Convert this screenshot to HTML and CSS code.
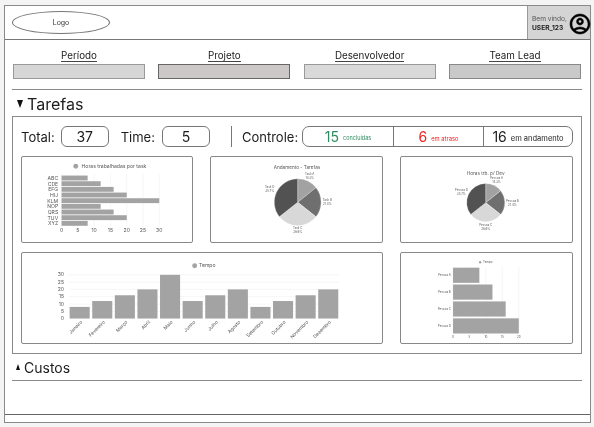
FILE: index.html
```html
<!DOCTYPE html>
<html lang="pt">
<head>
<meta charset="utf-8">
<title>Dashboard</title>
<link rel="stylesheet" href="styles.css">
</head>
<body>
<div class="frame">
  <header class="topbar">
    <div class="logo">Logo</div>
    <div class="user">
      <div class="user-text"><span>Bem vindo,</span><strong>USER_123</strong></div>
      <svg class="user-icon" viewBox="2 2 20 20"><path d="M12 2C6.48 2 2 6.48 2 12s4.48 10 10 10 10-4.48 10-10S17.52 2 12 2zM7.35 18.5C8.66 17.56 10.26 17 12 17s3.34.56 4.65 1.5C15.34 19.44 13.74 20 12 20s-3.34-.56-4.65-1.5zm10.79-1.38C16.45 15.8 14.32 15 12 15s-4.45.8-6.14 2.12C4.7 15.73 4 13.95 4 12c0-4.42 3.58-8 8-8s8 3.58 8 8c0 1.95-.7 3.73-1.86 5.12zM12 6c-1.93 0-3.5 1.57-3.5 3.5S10.07 13 12 13s3.5-1.57 3.5-3.5S13.93 6 12 6zm0 5c-.83 0-1.5-.67-1.5-1.5S11.17 8 12 8s1.5.67 1.5 1.5S12.83 11 12 11z"/></svg>
    </div>
  </header>

  <main class="content">
    <section class="filters">
      <div class="filter"><span class="filter-label">Período</span><div class="filter-box box-a"></div></div>
      <div class="filter"><span class="filter-label">Projeto</span><div class="filter-box box-b"></div></div>
      <div class="filter"><span class="filter-label">Desenvolvedor</span><div class="filter-box box-c"></div></div>
      <div class="filter"><span class="filter-label">Team Lead</span><div class="filter-box box-d"></div></div>
    </section>

    <h2 class="section-title title-open"><span class="caret caret-down"></span>Tarefas</h2>

    <section class="panel">
      <div class="stats">
        <span class="stat-label">Total:</span><span class="pill pill-total">37</span>
        <span class="stat-label stat-time">Time:</span><span class="pill pill-time">5</span>
        <span class="divider"></span>
        <span class="stat-label">Controle:</span>
        <div class="control">
          <div class="control-cell green"><b>15</b><small class="small-a">concluídas</small></div>
          <div class="control-cell red"><b>6</b><small class="small-b">em atraso</small></div>
          <div class="control-cell"><b>16</b><small class="small-c">em andamento</small></div>
        </div>
      </div>

      <div class="charts">
        <div class="card">
          <svg class="chart" viewBox="0 0 172 87">
            <g class="grid-lines">
              <path d="M39.500 17V72M56.200 17V72M72.800 17V72M89.500 17V72M106.200 17V72M122.800 17V72M139.500 17V72"/>
            </g>
            <circle class="dot" cx="54" cy="9.500" r="2.500"/>
            <text class="t5" x="60" y="11.300">Horas trabalhadas por task</text>
            <g class="bars">
              <rect x="39.500" y="19" width="26.700" height="5"/>
              <rect x="39.500" y="24.800" width="40" height="5"/>
              <rect x="39.500" y="30.600" width="53.300" height="5"/>
              <rect x="39.500" y="36.400" width="66.700" height="5"/>
              <rect x="39.500" y="42.200" width="100" height="5"/>
              <rect x="39.500" y="48" width="40" height="5"/>
              <rect x="39.500" y="53.800" width="53.300" height="5"/>
              <rect x="39.500" y="59.600" width="66.700" height="5"/>
              <rect x="39.500" y="65.400" width="26.700" height="5"/>
            </g>
            <g class="t5 end">
              <text x="36" y="23.600">ABC</text>
              <text x="36" y="29.400">CDE</text>
              <text x="36" y="35.200">EFG</text>
              <text x="36" y="41">HIJ</text>
              <text x="36" y="46.800">KLM</text>
              <text x="36" y="52.600">NOP</text>
              <text x="36" y="58.400">QRS</text>
              <text x="36" y="64.200">TUV</text>
              <text x="36" y="70">XYZ</text>
            </g>
            <g class="t5 mid">
              <text x="39.500" y="77">0</text>
              <text x="56.200" y="77">5</text>
              <text x="72.800" y="77">10</text>
              <text x="89.500" y="77">15</text>
              <text x="106.200" y="77">20</text>
              <text x="122.800" y="77">25</text>
              <text x="139.500" y="77">30</text>
            </g>
          </svg>
        </div>

        <div class="card">
          <svg class="chart" viewBox="0 0 173 87">
            <text class="t45 mid" x="87" y="12">Andamento - Tarefas</text>
            <g class="pie" transform="translate(87.700 46.300)">
              <path class="s1" d="M0 0V-24A24 24 0 0 1 18.760-14.960Z"/>
              <path class="s2" d="M0 0L18.760-14.960A24 24 0 0 1 18.760 14.960Z"/>
              <path class="s3" d="M0 0L18.760 14.960A24 24 0 0 1-18.760 14.960Z"/>
              <path class="s4" d="M0 0L-18.760 14.960A24 24 0 0 1 0-24Z"/>
            </g>
            <g class="t3 mid">
              <text x="100" y="18.500">Task A</text><text x="100" y="22.500">14.3%</text>
              <text x="118" y="45">Task B</text><text x="118" y="49">21.4%</text>
              <text x="87.700" y="74">Task C</text><text x="87.700" y="77.800">28.6%</text>
              <text x="59" y="32">Task D</text><text x="59" y="36">35.7%</text>
            </g>
          </svg>
        </div>

        <div class="card">
          <svg class="chart" viewBox="0 0 173 87">
            <text class="t45 mid" x="85.700" y="18">Horas trb. p/ Dev</text>
            <g class="pie" transform="translate(85.700 46.700)">
              <path class="s1" d="M0 0V-19.600A19.600 19.600 0 0 1 15.300-12.200Z"/>
              <path class="s2" d="M0 0L15.300-12.200A19.600 19.600 0 0 1 15.300 12.200Z"/>
              <path class="s3" d="M0 0L15.300 12.200A19.600 19.600 0 0 1-15.300 12.200Z"/>
              <path class="s4" d="M0 0L-15.300 12.200A19.600 19.600 0 0 1 0-19.600Z"/>
            </g>
            <g class="t3 mid">
              <text x="96.700" y="23">Pessoa A</text><text x="96.700" y="27">14.3%</text>
              <text x="113" y="46">Pessoa B</text><text x="113" y="50">21.4%</text>
              <text x="85.700" y="70.700">Pessoa C</text><text x="85.700" y="74.700">28.6%</text>
              <text x="60.700" y="35">Pessoa D</text><text x="60.700" y="39">35.7%</text>
            </g>
          </svg>
        </div>

        <div class="card card-wide">
          <svg class="chart" viewBox="0 0 362 92">
            <g class="grid-lines">
              <path d="M45 22.300H321M45 29.800H321M45 37.200H321M45 44.700H321M45 52.200H321M45 59.600H321"/>
            </g>
            <circle class="dot" cx="173.500" cy="13" r="2.500"/>
            <text class="t5" x="178" y="14.800">Tempo</text>
            <g class="bars">
              <rect x="45.700" y="55.100" width="20.500" height="11.900"/>
              <rect x="68.800" y="49.100" width="20.500" height="17.900"/>
              <rect x="91.900" y="43.200" width="20.500" height="23.800"/>
              <rect x="115" y="37.200" width="20.500" height="29.800"/>
              <rect x="138.100" y="22.300" width="20.500" height="44.700"/>
              <rect x="161.200" y="49.100" width="20.500" height="17.900"/>
              <rect x="184.300" y="43.200" width="20.500" height="23.800"/>
              <rect x="207.400" y="37.200" width="20.500" height="29.800"/>
              <rect x="230.500" y="55.100" width="20.500" height="11.900"/>
              <rect x="253.600" y="49.100" width="20.500" height="17.900"/>
              <rect x="276.700" y="43.200" width="20.500" height="23.800"/>
              <rect x="299.800" y="37.200" width="20.500" height="29.800"/>
            </g>
            <g class="t5 end">
              <text x="40" y="24">30</text>
              <text x="40" y="31.500">25</text>
              <text x="40" y="39">20</text>
              <text x="40" y="46.400">15</text>
              <text x="40" y="53.900">10</text>
              <text x="40" y="61.300">5</text>
              <text x="40" y="68.800">0</text>
            </g>
            <g class="t48 end">
              <text transform="translate(59 71) rotate(-45)">Janeiro</text>
              <text transform="translate(82.100 71) rotate(-45)">Fevereiro</text>
              <text transform="translate(105.200 71) rotate(-45)">Março</text>
              <text transform="translate(128.300 71) rotate(-45)">Abril</text>
              <text transform="translate(151.400 71) rotate(-45)">Maio</text>
              <text transform="translate(174.500 71) rotate(-45)">Junho</text>
              <text transform="translate(197.600 71) rotate(-45)">Julho</text>
              <text transform="translate(220.700 71) rotate(-45)">Agosto</text>
              <text transform="translate(243.800 71) rotate(-45)">Setembro</text>
              <text transform="translate(266.900 71) rotate(-45)">Outubro</text>
              <text transform="translate(290 71) rotate(-45)">Novembro</text>
              <text transform="translate(313.100 71) rotate(-45)">Dezembro</text>
            </g>
          </svg>
        </div>

        <div class="card">
          <svg class="chart" viewBox="0 0 173 92">
            <g class="grid-lines">
              <path d="M52.300 14V81M69.100 14V81M85.900 14V81M102.700 14V81M119.500 14V81"/>
            </g>
            <circle class="dot" cx="80" cy="9.500" r="1.200"/>
            <text class="t3" x="83" y="10.500">Tempo</text>
            <g class="bars">
              <rect x="52.300" y="15" width="26.900" height="15.500"/>
              <rect x="52.300" y="32.200" width="40.300" height="15.500"/>
              <rect x="52.300" y="49.500" width="53.800" height="15.500"/>
              <rect x="52.300" y="66.800" width="67.200" height="15.500"/>
            </g>
            <g class="t3 end">
              <text x="50" y="23.700">Pessoa A</text>
              <text x="50" y="40.800">Pessoa B</text>
              <text x="50" y="58">Pessoa C</text>
              <text x="50" y="75.300">Pessoa D</text>
            </g>
            <g class="t3 mid">
              <text x="52.300" y="87">0</text>
              <text x="69.100" y="87">5</text>
              <text x="85.900" y="87">10</text>
              <text x="102.700" y="87">15</text>
              <text x="119.500" y="87">20</text>
            </g>
          </svg>
        </div>
      </div>
    </section>

    <h2 class="section-title title-closed"><span class="caret caret-up"></span>Custos</h2>
  </main>

  <footer class="footer"></footer>
</div>
</body>
</html>
```

FILE: styles.css
```css
* { box-sizing: border-box; }

html, body { margin: 0; padding: 0; }

body {
  width: 594px;
  height: 427px;
  overflow: hidden;
  background: #f4f4f4;
  font-family: Inter, "Liberation Sans", sans-serif;
  color: #1c1c1c;
  padding: 5px 3px 4px 4px;
}

.frame {
  height: 418px;
  display: flex;
  flex-direction: column;
  background: #fff;
  border: 1px solid #8a8a8a;
}

.topbar {
  height: 34px;
  flex: none;
  display: flex;
  justify-content: space-between;
  border-bottom: 1px solid #777;
  padding-left: 7px;
  transform: translateZ(0);
}

.logo {
  width: 98px;
  height: 23px;
  margin-top: 5px;
  border: 1px solid #777;
  border-radius: 50%;
  display: flex;
  align-items: center;
  justify-content: center;
  font-size: 7px;
  color: #333;
}

.user {
  width: 63px;
  display: flex;
  align-items: center;
  gap: 3px;
  padding-left: 4px;
  background: #d4d4d4;
  border-left: 1px solid #999;
}

.user-text {
  display: flex;
  flex-direction: column;
  font-size: 6.600px;
  line-height: 8.500px;
  margin-top: 2px;
  color: #555;
  white-space: nowrap;
}

.user-text strong { font-weight: 700; color: #222; }

.user-icon { width: 20px; height: 20px; flex: none; margin-top: 2px; overflow: visible; }
.user-icon path { stroke: #000; stroke-width: 0.500; }

.content {
  flex: 1;
  min-height: 0;
  padding: 0 8px 0 7px;
  transform: translateZ(0);
}

.filters {
  display: grid;
  grid-template-columns: repeat(4, 132px);
  justify-content: space-between;
  padding: 10px 1px 10px 1px;
  border-bottom: 1px solid #8a8a8a;
}

.filter {
  display: flex;
  flex-direction: column;
  align-items: center;
  gap: 2px;
}

.filter-label {
  font-size: 9.800px;
  line-height: 11px;
  border-bottom: 1px solid #444;
}

.filter-box { width: 100%; height: 15px; border: 1px solid #999; }
.box-a { background: #d6d6d6; }
.box-b { background: #cbc8c7; border-color: #666; }
.box-c { background: #d9d9d9; }
.box-d { background: #c9c9c9; border-color: #888; }

.section-title {
  margin: 0;
  font-weight: 400;
  display: flex;
  align-items: center;
}

.title-open { font-size: 16px; line-height: 20px; padding: 2px 0 0 5px; height: 26px; }
.title-closed {
  font-size: 14px;
  line-height: 18px;
  padding: 2px 0 0 4px;
  height: 27px;
  border-bottom: 1px solid #8a8a8a;
}

.caret { width: 0; height: 0; margin-right: 4px; flex: none; }
.caret-down { border-left: 3px solid transparent; border-right: 3px solid transparent; border-top: 8px solid #111; }
.caret-up { border-left: 2px solid transparent; border-right: 2px solid transparent; border-bottom: 6px solid #111; margin-top: -3px; }

.panel {
  height: 238px;
  border: 1px solid #8a8a8a;
  padding: 9px 8px 0 8px;
}

.stats {
  display: flex;
  align-items: center;
  height: 21px;
  font-size: 13px;
}

.stat-label { white-space: nowrap; }
.stat-time { margin-left: 12px; }

.pill {
  flex: none;
  height: 21px;
  border: 1px solid #777;
  border-radius: 6px;
  display: flex;
  align-items: center;
  justify-content: center;
  font-size: 14px;
}

.pill-total { width: 48px; margin-left: 6px; }
.pill-time { width: 48px; margin-left: 7px; }

.divider {
  flex: none;
  width: 1px;
  height: 21px;
  background: #777;
  margin: 0 10px 0 21px;
}

.control {
  flex: none;
  width: 271px;
  height: 21px;
  margin-left: auto;
  border: 1px solid #777;
  border-radius: 7px;
  display: grid;
  grid-template-columns: 90px 90px 1fr;
}

.control-cell {
  display: flex;
  align-items: center;
  justify-content: center;
  gap: 4px;
  border-left: 1px solid #777;
  color: #222;
}

.control-cell:first-child { border-left: 0; }
.control-cell b { font-weight: 400; font-size: 14px; }
.control-cell small { margin-top: 3px; white-space: nowrap; }
.small-a { font-size: 5.500px; }
.small-b { font-size: 5.800px; }
.small-c { font-size: 7.500px; }

.green { color: #2e8b5f; }
.red { color: #f02020; }

.charts {
  display: grid;
  grid-template-columns: 172px 173px 173px;
  grid-template-rows: 87px 92px;
  gap: 9px 17px;
  margin-top: 9px;
}

.card {
  border: 1px solid #888;
  border-radius: 2px;
  background: #fff;
  overflow: hidden;
}

.card-wide { grid-column: span 2; }

.chart { display: block; width: 100%; height: 100%; }

.grid-lines path { stroke: #efefef; stroke-width: 0.600; fill: none; }
.bars rect { fill: #a3a3a3; }
.dot { fill: #a3a3a3; }

.chart text { fill: #555; }
.t3 { font-size: 3px; }
.t45 { font-size: 4.800px; }
.t48 { font-size: 4.800px; }
.t5 { font-size: 5.200px; }
.mid { text-anchor: middle; }
.end { text-anchor: end; }

.pie path { stroke: #fff; stroke-width: 0.300; }
.s1 { fill: #a2a2a2; }
.s2 { fill: #6f6f6f; }
.s3 { fill: #d8d8d8; }
.s4 { fill: #525252; }

.footer {
  height: 8px;
  flex: none;
  border-top: 1px solid #666;
}
```
